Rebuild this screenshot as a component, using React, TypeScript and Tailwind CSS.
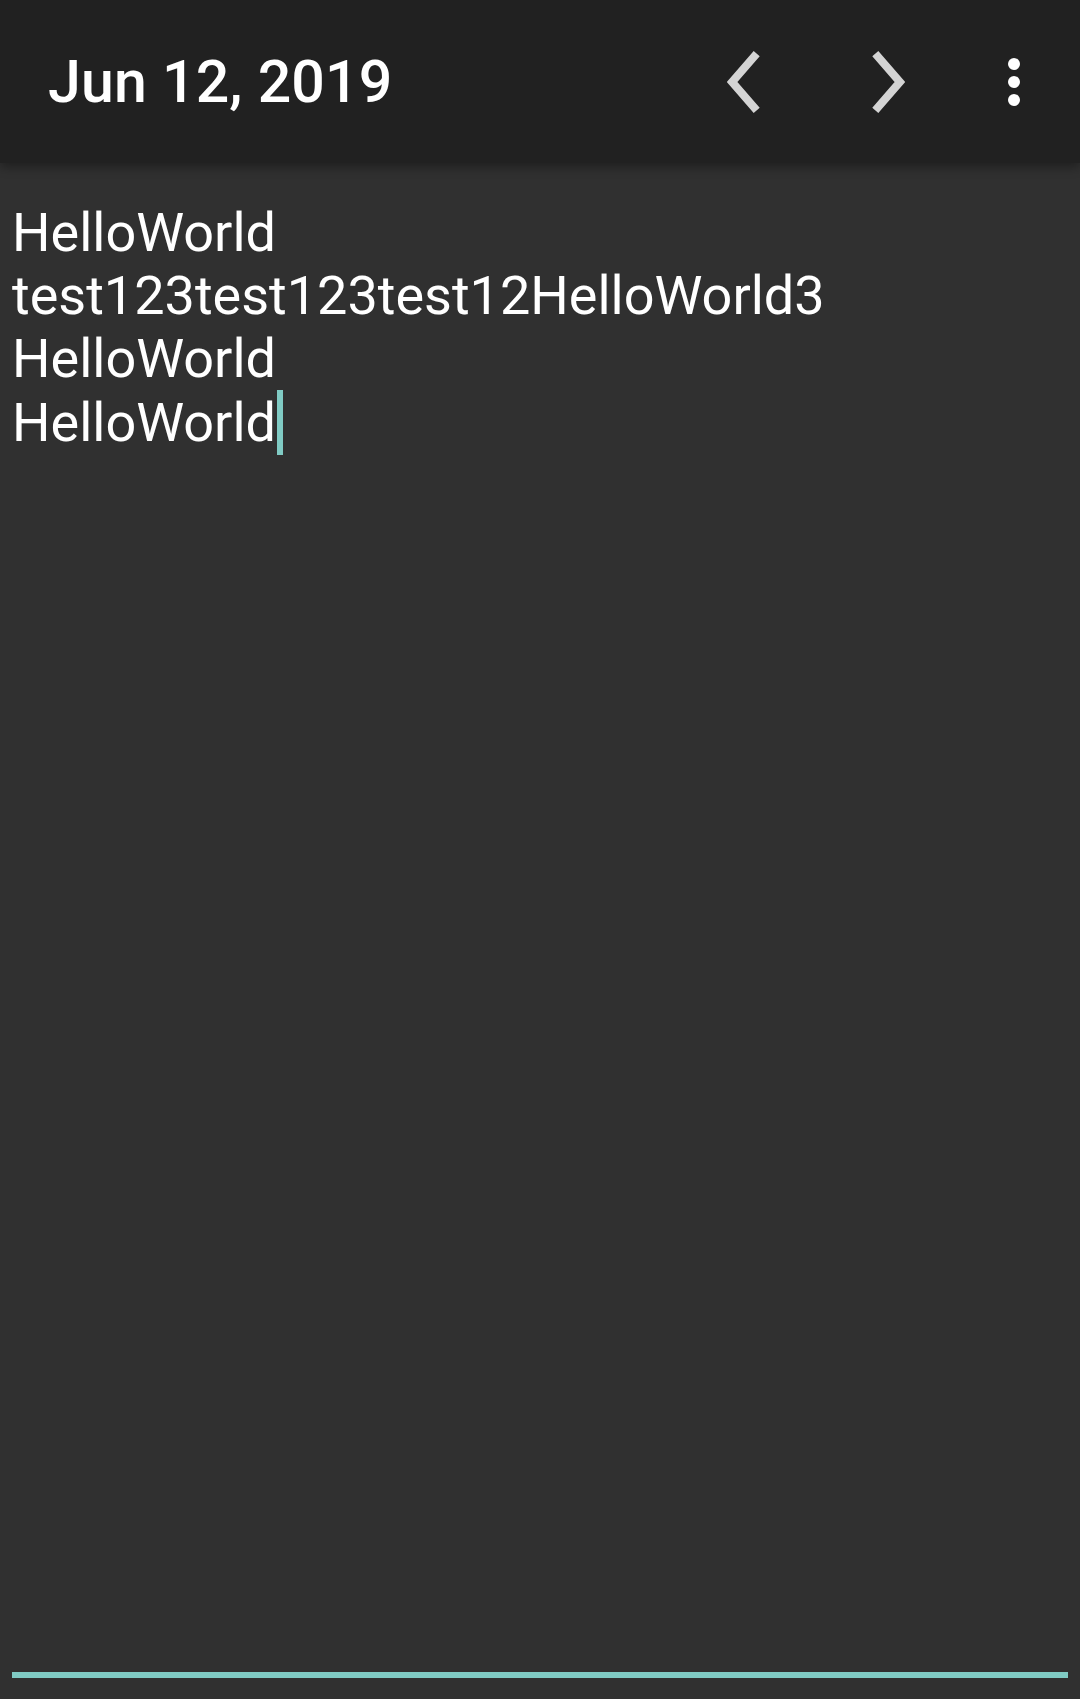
export default function App() {
  return (
    <div
      className="flex h-screen w-full flex-col bg-[#303030] text-white"
      style={{ fontFamily: "Roboto, 'Noto Sans', sans-serif" }}
    >
      <header className="relative z-10 flex h-[163px] shrink-0 items-center bg-[#212121] shadow-[0_4px_10px_rgba(0,0,0,0.35)]">
        <h1 className="flex-1 pl-[48px] text-[59px] font-medium leading-none tracking-[0.2px]">
          Jun 12, 2019
        </h1>
        <div className="flex items-center pr-[34px]">
          <button className="flex h-[64px] w-[64px] items-center justify-center" aria-label="Previous day">
            <svg width="34" height="64" viewBox="0 0 34 64" fill="none">
              <polyline points="29.7,3.7 5,32 29.7,60.3" stroke="#d4d4d4" strokeWidth="8" strokeLinejoin="miter" />
            </svg>
          </button>
          <button className="ml-[80px] flex h-[64px] w-[64px] items-center justify-center" aria-label="Next day">
            <svg width="34" height="64" viewBox="0 0 34 64" fill="none">
              <polyline points="4.3,3.7 29,32 4.3,60.3" stroke="#d4d4d4" strokeWidth="8" strokeLinejoin="miter" />
            </svg>
          </button>
          <button className="ml-[62px] flex h-[64px] w-[64px] flex-col items-center justify-center gap-[6px]" aria-label="More options">
            <span className="h-[12px] w-[12px] rounded-full bg-white" />
            <span className="h-[12px] w-[12px] rounded-full bg-white" />
            <span className="h-[12px] w-[12px] rounded-full bg-white" />
          </button>
        </div>
      </header>

      <main className="flex-1 px-[12px] pt-[38px] text-[54px] leading-[63px]">
        <p>HelloWorld</p>
        <p>test123test123test12HelloWorld3</p>
        <p>HelloWorld</p>
        <p className="flex items-center">
          HelloWorld
          <span className="ml-[1px] inline-block h-[65px] w-[6px] bg-[#80cbc4]" />
        </p>
      </main>

      <div className="mx-[12px] mb-[21px] h-[6px] shrink-0 bg-[#80cbc4]" />
    </div>
  );
}
